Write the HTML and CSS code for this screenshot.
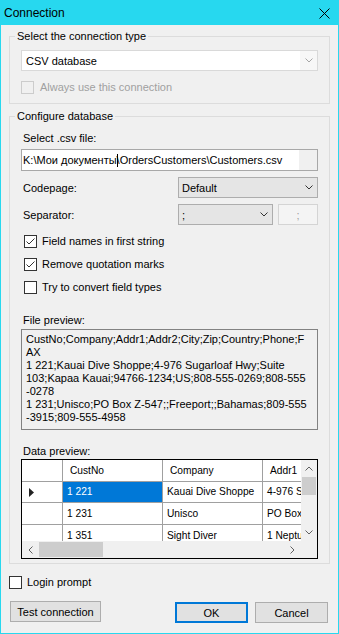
FILE: index.html
```html
<!DOCTYPE html>
<html>
<head>
<meta charset="utf-8">
<title>Connection</title>
<link rel="stylesheet" href="styles.css">
</head>
<body>
<div class="window">
  <div class="titlebar">
    <span class="title">Connection</span>
    <svg class="close" width="11" height="11" viewBox="0 0 11 11"><path d="M0.5 0.5L10.5 10.5M10.5 0.5L0.5 10.5" stroke="#000" stroke-width="1" fill="none"/></svg>
  </div>
  <div class="client">
    <fieldset class="group g1">
      <legend>Select the connection type</legend>
      <div class="gbody">
        <div class="combo combo-edit">
          <span class="combo-text">CSV database</span>
          <span class="combo-btn"><svg width="8" height="5" viewBox="0 0 8 5"><path d="M0.5 0.5L4 4L7.5 0.5" stroke="#a6a6a6" fill="none"/></svg></span>
        </div>
        <div class="check check-g1 disabled">
          <svg width="13" height="13" viewBox="0 0 13 13"><rect x="0.5" y="0.5" width="12" height="12" fill="#f0f0f0" stroke="#cccccc"/></svg>
          <span>Always use this connection</span>
        </div>
      </div>
    </fieldset>

    <fieldset class="group g2">
      <legend>Configure database</legend>
      <div class="gbody">
        <div class="lbl">Select .csv file:</div>
        <div class="edit">
          <span class="edit-text">K:\Мои документы<i class="caret"></i>\OrdersCustomers\Customers.csv</span>
          <span class="edit-strip"></span>
        </div>
        <div class="field-row">
          <span class="lbl">Codepage:</span>
          <div class="combo combo-list w140">
            <span class="combo-text">Default</span>
            <span class="combo-btn"><svg width="8" height="5" viewBox="0 0 8 5"><path d="M0.5 0.5L4 4L7.5 0.5" stroke="#333" fill="none"/></svg></span>
          </div>
        </div>
        <div class="field-row">
          <span class="lbl">Separator:</span>
          <div class="sep-controls">
            <div class="combo combo-list w95">
              <span class="combo-text">;</span>
              <span class="combo-btn"><svg width="8" height="5" viewBox="0 0 8 5"><path d="M0.5 0.5L4 4L7.5 0.5" stroke="#333" fill="none"/></svg></span>
            </div>
            <div class="btn-small">;</div>
          </div>
        </div>

        <div class="checks">
          <div class="check check-g2">
            <svg width="13" height="13" viewBox="0 0 13 13"><rect x="0.5" y="0.5" width="12" height="12" fill="#fff" stroke="#333"/><path d="M2.5 6.5L5 9L10.5 3.5" stroke="#333" fill="none"/></svg>
            <span>Field names in first string</span>
          </div>
          <div class="check check-g2">
            <svg width="13" height="13" viewBox="0 0 13 13"><rect x="0.5" y="0.5" width="12" height="12" fill="#fff" stroke="#333"/><path d="M2.5 6.5L5 9L10.5 3.5" stroke="#333" fill="none"/></svg>
            <span>Remove quotation marks</span>
          </div>
          <div class="check check-g2">
            <svg width="13" height="13" viewBox="0 0 13 13"><rect x="0.5" y="0.5" width="12" height="12" fill="#fff" stroke="#333"/></svg>
            <span>Try to convert field types</span>
          </div>
        </div>

        <div class="lbl preview-lbl">File preview:</div>
        <div class="preview">CustNo;Company;Addr1;Addr2;City;Zip;Country;Phone;F<br>AX<br>1 221;Kauai Dive Shoppe;4-976 Sugarloaf Hwy;Suite<br>103;Kapaa Kauai;94766-1234;US;808-555-0269;808-555<br>-0278<br>1 231;Unisco;PO Box Z-547;;Freeport;;Bahamas;809-555<br>-3915;809-555-4958</div>

        <div class="lbl data-lbl">Data preview:</div>
        <div class="dgrid">
          <div class="cells">
            <div class="cell rh"></div>
            <div class="cell hc">CustNo</div>
            <div class="cell hc">Company</div>
            <div class="cell hc">Addr1</div>

            <div class="cell rh"><svg class="tri" width="5" height="9" viewBox="0 0 5 9"><path d="M0 0L5 4.5L0 9Z" fill="#222"/></svg></div>
            <div class="cell sel">1 221</div>
            <div class="cell">Kauai Dive Shoppe</div>
            <div class="cell">4-976 Sugarloaf Hwy</div>

            <div class="cell rh"></div>
            <div class="cell">1 231</div>
            <div class="cell">Unisco</div>
            <div class="cell">PO Box Z-547</div>

            <div class="cell rh"></div>
            <div class="cell">1 351</div>
            <div class="cell">Sight Diver</div>
            <div class="cell">1 Neptune Lane</div>
          </div>
          <div class="vscroll">
            <span class="sbtn"><svg width="8" height="5" viewBox="0 0 8 5"><path d="M0.5 4.5L4 1L7.5 4.5" stroke="#606060" fill="none"/></svg></span>
            <span class="vthumb"></span>
            <span class="spacer"></span>
            <span class="sbtn"><svg width="8" height="5" viewBox="0 0 8 5"><path d="M0.5 0.5L4 4L7.5 0.5" stroke="#606060" fill="none"/></svg></span>
          </div>
          <div class="hscroll">
            <span class="hbtn"><svg width="5" height="8" viewBox="0 0 5 8"><path d="M4.5 0.5L1 4L4.5 7.5" stroke="#606060" fill="none"/></svg></span>
            <span class="hthumb"></span>
            <span class="spacer"></span>
            <span class="hbtn"><svg width="5" height="8" viewBox="0 0 5 8"><path d="M0.5 0.5L4 4L0.5 7.5" stroke="#606060" fill="none"/></svg></span>
          </div>
          <div class="corner"></div>
        </div>
      </div>
    </fieldset>

    <div class="check login">
      <svg width="13" height="13" viewBox="0 0 13 13"><rect x="0.5" y="0.5" width="12" height="12" fill="#fff" stroke="#333"/></svg>
      <span>Login prompt</span>
    </div>

    <div class="buttons">
      <div class="btn btn-test">Test connection</div>
      <div class="btn btn-ok">OK</div>
      <div class="btn btn-cancel">Cancel</div>
    </div>
  </div>
</div>
</body>
</html>
```
FILE: styles.css
```css
* { box-sizing: border-box; }
html, body { margin: 0; padding: 0; }
body {
  width: 339px;
  height: 634px;
  background: #f0f0f0;
  font-family: "Liberation Sans", Arial, sans-serif;
  font-size: 11px;
  line-height: 14px;
  color: #000;
}
.window {
  width: 339px;
  height: 634px;
  border: 1px solid #27d8ef;
  background: #f0f0f0;
  display: flex;
  flex-direction: column;
}
.titlebar {
  height: 24px;
  flex: none;
  background: #27d8ef;
  display: flex;
  align-items: center;
  justify-content: space-between;
  padding: 0 8px 0 3px;
}
.title { font-size: 12px; line-height: 15px; }
.close { display: block; margin-top: 1px; }

.client {
  padding: 4px 8px 0 8px;
  display: flex;
  flex-direction: column;
}
.group {
  margin: 0;
  padding: 7px 5px 9px 5px;
  border: 1px solid #dcdcdc;
  min-width: 0;
}
.group legend {
  padding: 0 2px;
  line-height: 14px;
}
.g2 {
  margin-top: 5px;
  padding-top: 8px;
  padding-bottom: 4px;
}
.gbody {
  padding: 0 6px;
  display: flex;
  flex-direction: column;
}

.lbl { margin-left: 2px; white-space: nowrap; }

.combo {
  height: 21px;
  display: flex;
  align-items: center;
  border: 1px solid #adadad;
  background: #e5e5e5;
}
.combo-text {
  flex: 1;
  padding-left: 3px;
  white-space: nowrap;
  overflow: hidden;
}
.combo-btn {
  flex: none;
  width: 17px;
  align-self: stretch;
  display: flex;
  align-items: center;
  justify-content: center;
}
.combo-btn svg { display: block; }
.combo-edit {
  border-color: #d9d9d9;
  background: #f7f7f7;
}
.combo-edit .combo-text {
  align-self: stretch;
  display: flex;
  align-items: center;
  background: #fff;
  padding-left: 4px;
}
.w140 { width: 140px; }
.w95 { width: 95px; }

.check {
  display: flex;
  align-items: center;
  height: 13px;
  line-height: 13px;
  white-space: nowrap;
}
.check svg { display: block; flex: none; }
.check-g1 { margin-top: 10px; }
.check-g1 svg { margin-right: 6px; }
.disabled { color: #a0a0a0; }
.check-g2 { margin-left: 3px; }
.check-g2 svg { margin-right: 5px; }
.checks {
  margin-top: 10px;
  display: flex;
  flex-direction: column;
  gap: 10px;
}

.edit {
  margin-top: 4px;
  height: 22px;
  display: flex;
  border: 1px solid #a8a8a8;
  background: #f0f0f0;
}
.edit-text {
  flex: 1;
  background: #fff;
  display: flex;
  align-items: center;
  padding-left: 1px;
  white-space: nowrap;
  overflow: hidden;
}
.caret {
  display: inline-block;
  width: 1px;
  height: 13px;
  background: #000;
  margin-right: -1px;
}
.edit-strip { flex: none; width: 18px; }

.field-row {
  margin-top: 6px;
  display: flex;
  align-items: center;
  justify-content: space-between;
}
.sep-controls {
  display: flex;
  gap: 5px;
}
.btn-small {
  width: 40px;
  height: 21px;
  border: 1px solid #d4d4d4;
  background: #f4f4f4;
  color: #a0a0a0;
  display: flex;
  align-items: center;
  justify-content: center;
}

.preview-lbl { margin-top: 19px; }
.preview {
  margin-top: 2px;
  height: 101px;
  border: 1px solid #828282;
  padding: 3px 4px;
  line-height: 13px;
  white-space: nowrap;
  overflow: hidden;
}
.data-lbl { margin-top: 14px; }

.dgrid {
  margin-top: 1px;
  height: 100px;
  border: 1px solid #000;
  display: grid;
  grid-template-columns: minmax(0, 1fr) 16px;
  grid-template-rows: minmax(0, 1fr) 17px;
  background: #fff;
}
.cells {
  display: grid;
  grid-template-columns: 41px 100px 100px 100px;
  grid-template-rows: 22px 21px 22px 22px;
  overflow: hidden;
  font-size: 10.2px;
}
.cell {
  border-right: 1px solid #a0a0a0;
  border-bottom: 1px solid #a0a0a0;
  padding-left: 4px;
  display: flex;
  align-items: center;
  white-space: nowrap;
  overflow: hidden;
  background: #fff;
}
.hc { padding-left: 7px; }
.rh { padding-left: 7px; }
.tri { display: block; }
.sel { background: #0078d7; color: #fff; }

.vscroll {
  background: #f0f0f0;
  display: flex;
  flex-direction: column;
}
.sbtn {
  flex: none;
  height: 17px;
  display: flex;
  align-items: center;
  justify-content: center;
}
.sbtn svg, .hbtn svg { display: block; }
.vthumb {
  flex: none;
  height: 18px;
  margin: 0 1px;
  background: #cdcdcd;
}
.spacer { flex: 1; }
.hscroll {
  background: #f0f0f0;
  display: flex;
}
.hbtn {
  flex: none;
  width: 17px;
  display: flex;
  align-items: center;
  justify-content: center;
}
.hthumb {
  flex: none;
  width: 64px;
  margin: 1px 0;
  background: #cdcdcd;
}
.corner { background: #f0f0f0; }

.login { margin-top: 12px; }
.login svg { margin-right: 5px; }

.buttons {
  margin-top: 12px;
  display: flex;
  align-items: flex-start;
  padding: 0 2px 0 1px;
}
.btn {
  height: 21px;
  border: 1px solid #adadad;
  background: #e1e1e1;
  display: flex;
  align-items: center;
  justify-content: center;
  white-space: nowrap;
}
.btn-test { width: 91px; }
.btn-ok {
  width: 73px;
  margin-left: auto;
  margin-top: 1px;
  border: 2px solid #0078d7;
}
.btn-cancel {
  width: 73px;
  margin-left: 7px;
  margin-top: 1px;
}
```
